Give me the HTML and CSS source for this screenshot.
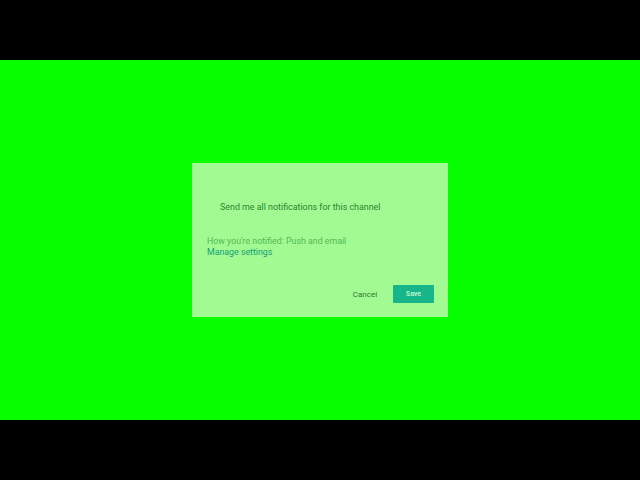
FILE: index.html
```html
<!DOCTYPE html>
<html>
<head>
<meta charset="utf-8">
<link rel="stylesheet" href="styles.css">
</head>
<body>
<div class="screen">
  <div class="bar"></div>
  <div class="stage">
    <div class="dialog">
      <div class="option">
        <span class="check"></span>
        <span class="option-label">Send me all notifications for this channel</span>
      </div>
      <div class="info">
        <div class="info-line">How you're notified: Push and email</div>
        <a class="manage">Manage settings</a>
      </div>
      <div class="actions">
        <button class="btn cancel">Cancel</button>
        <button class="btn save">Save</button>
      </div>
    </div>
  </div>
  <div class="bar"></div>
</div>
</body>
</html>
```
FILE: styles.css
```css
html, body {
  margin: 0;
  padding: 0;
  background: #000;
}
.screen {
  width: 640px;
  height: 480px;
  display: flex;
  flex-direction: column;
  font-family: Roboto, "Liberation Sans", sans-serif;
}
.bar {
  height: 60px;
  background: #000;
}
.stage {
  height: 360px;
  background: #08ff00;
  display: flex;
  align-items: center;
  justify-content: center;
}
.dialog {
  width: 256px;
  height: 154px;
  box-sizing: border-box;
  background: #a1fa92;
  display: flex;
  flex-direction: column;
  padding: 0 14px 14px 15px;
}
.option {
  display: flex;
  align-items: center;
  margin-top: 37px;
  height: 14px;
}
.check {
  width: 13px;
  height: 10px;
}
.option-label {
  font-size: 8.9px;
  color: #2a852c;
}
.info {
  margin-top: 22px;
  display: flex;
  flex-direction: column;
  gap: 0;
}
.info-line {
  font-size: 8.8px;
  color: #55b955;
  line-height: 11px;
}
.manage {
  font-size: 8.8px;
  color: #16a078;
  line-height: 11px;
}
.actions {
  margin-top: auto;
  display: flex;
  justify-content: flex-end;
  align-items: center;
  gap: 8px;
}
.btn {
  border: none;
  font-family: inherit;
  height: 18px;
  padding: 0;
  border-radius: 1px;
}
.cancel {
  background: transparent;
  color: #2a7a30;
  font-size: 8px;
  width: 40px;
}
.save {
  background: #17b58a;
  color: #b8f5c8;
  font-size: 7px;
  font-weight: 700;
  width: 41px;
}
```
